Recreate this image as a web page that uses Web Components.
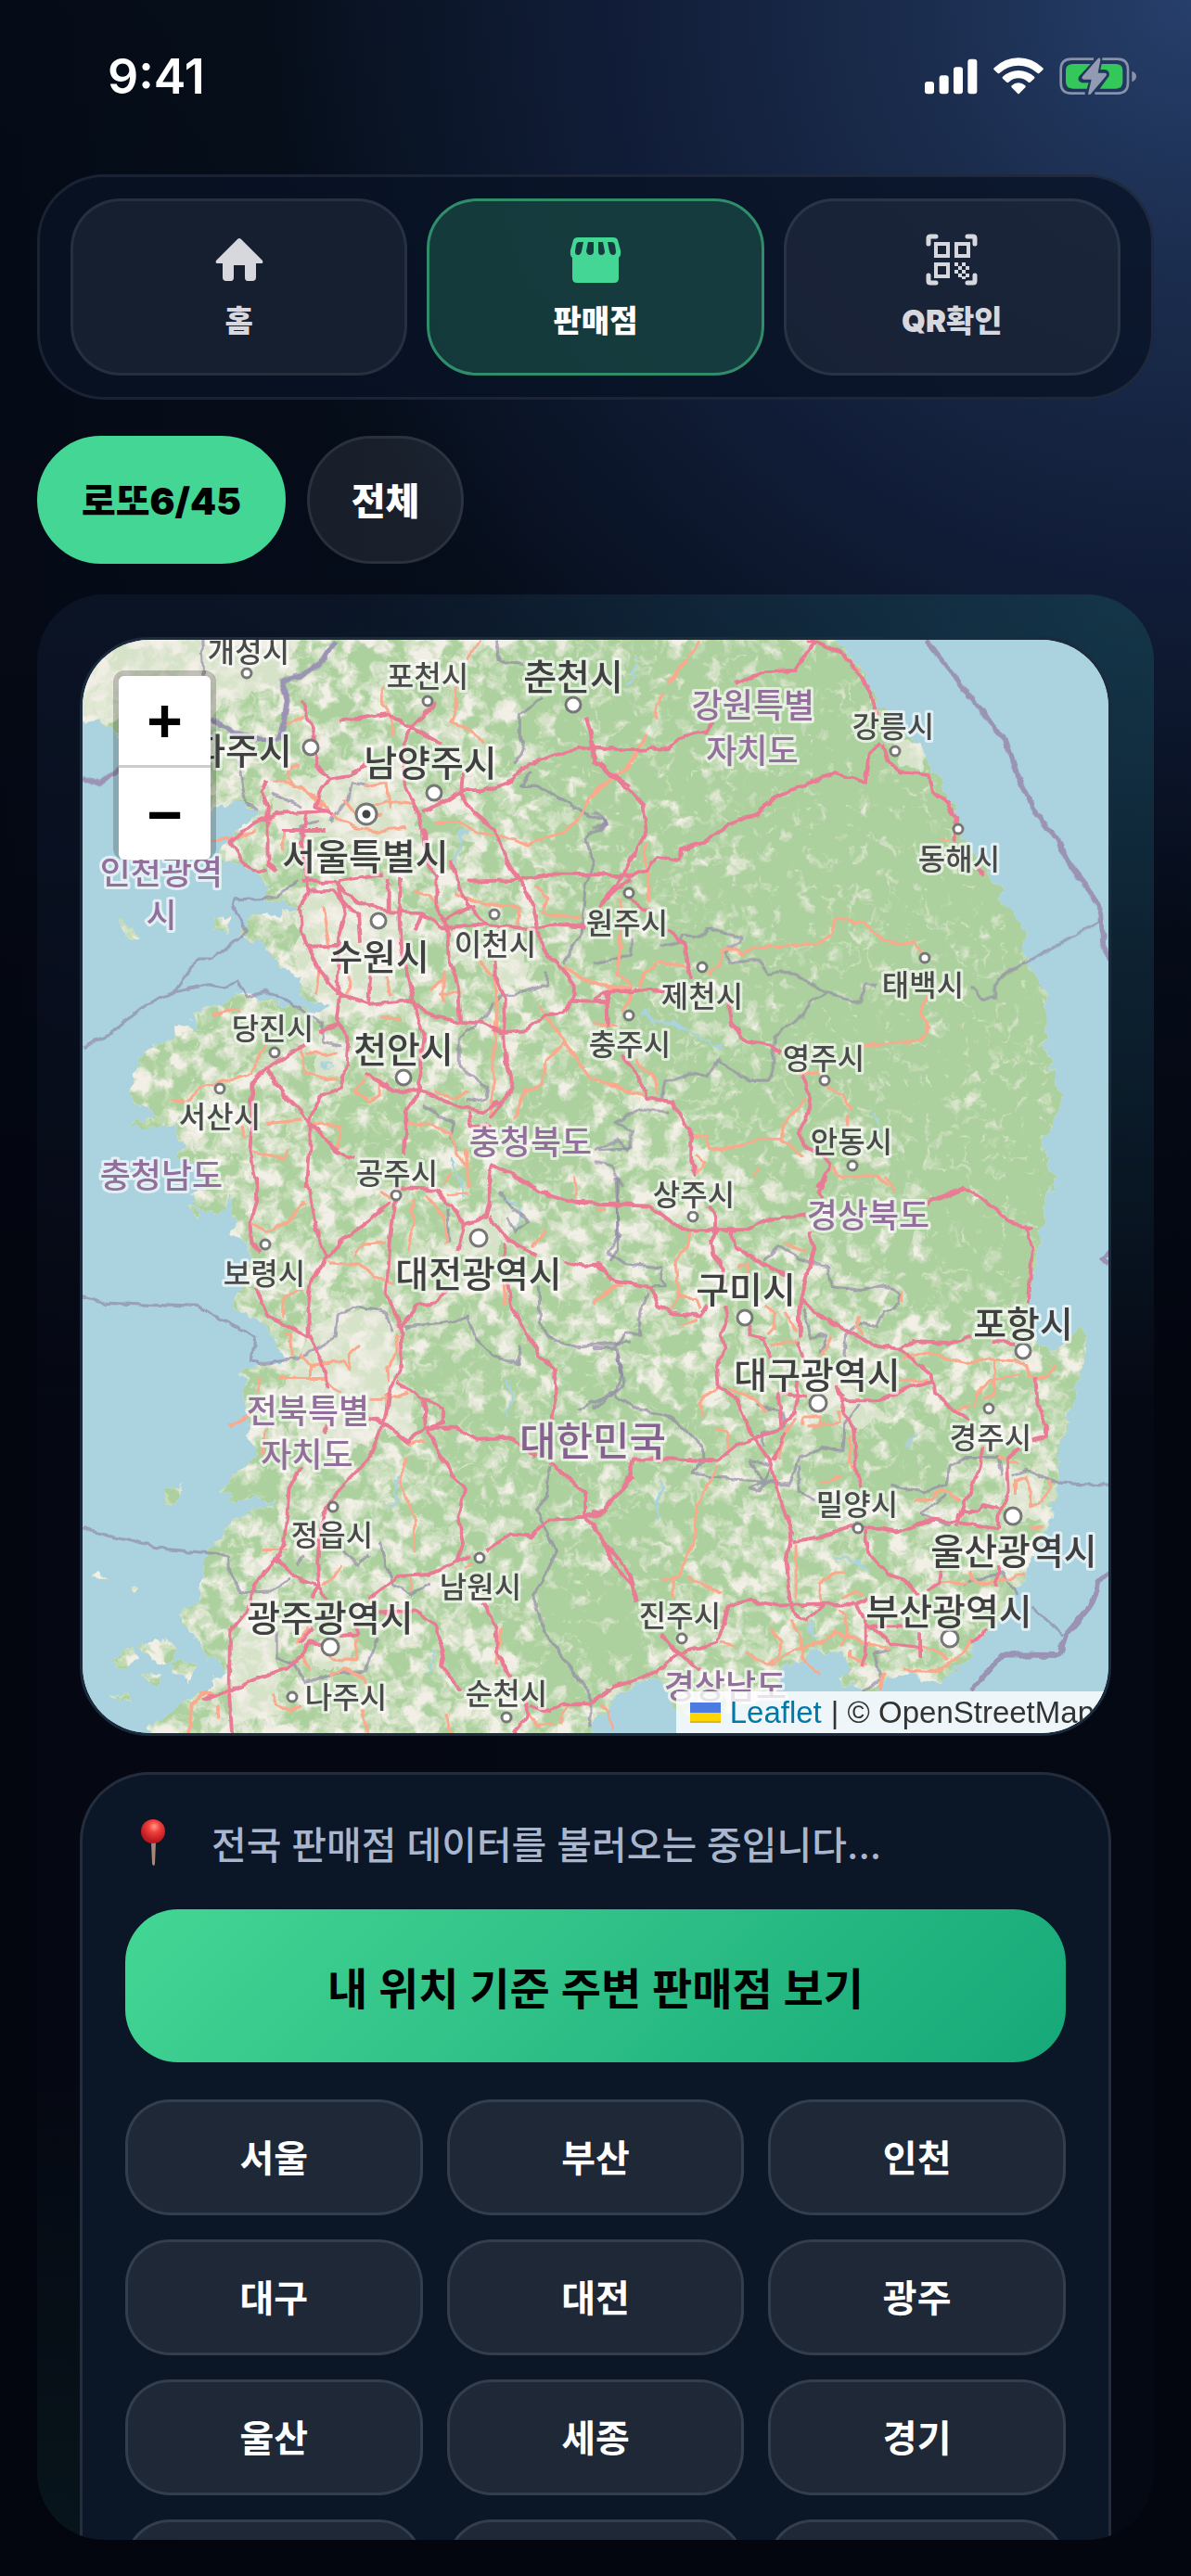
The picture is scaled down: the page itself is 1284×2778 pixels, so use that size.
<!DOCTYPE html>
<html lang="ko">
<head>
<meta charset="utf-8">
<meta name="viewport" content="width=device-width, initial-scale=1">
<title>판매점</title>
<style>
    html, body {
        margin: 0;
        height: 100%;
    }
    body {
        background: #03060f;
        color: #fff;
        font-family: Inter, 'Noto Sans CJK KR', sans-serif;
    }
</style>
</head>
<body>
<store-app></store-app>

<script>
'use strict';

class StatusBar extends HTMLElement {
    constructor() {
        super();
        this.attachShadow({mode: 'open'});
        this.shadowRoot.innerHTML = `
        <time>9:41</time>
        <div id="icons">
            <svg width="57" height="40" viewBox="105 92 171 120" fill="#fff">
                <rect x="105" y="170" width="30" height="40" rx="9"/>
                <rect x="152" y="150" width="30" height="60" rx="9"/>
                <rect x="198" y="123" width="30" height="87" rx="9"/>
                <rect x="244" y="97" width="30" height="113" rx="9"/>
            </svg>
            <svg width="54" height="40" viewBox="328 92 162 120" fill="#fff">
                <path d="M330 126Q364 93 409 93T488 126Q491 129 488 132L476 143Q473 145 470 142Q443 118 409 118T348 142Q345 145 342 143L330 132Q327 129 330 126Z"/>
                <path d="M358 154Q381 134 409 134T460 154Q463 157 460 160L447 172Q444 174 441 172Q427 159 409 159T377 172Q374 174 371 172L358 160Q355 157 358 154Z"/>
                <path d="M387 183Q397 174 409 174T431 183Q434 186 431 189L412 208Q409 211 406 208L387 189Q384 186 387 183Z"/>
            </svg>
            <svg width="84" height="40" viewBox="543 92 252 120">
                <g fill="none" stroke="#8892aa" stroke-width="8">
                    <path d="M654 97H582Q548 97 548 131V174Q548 208 582 208H626"/>
                    <path d="M682 97H731Q765 97 765 131V174Q765 208 731 208H658"/>
                </g>
                <path d="M778 136Q792 141 792 153T778 171Z" fill="#8892aa"/>
                <path d="M644 113H588Q564 113 564 134V171Q564 193 588 193H632L638 174H617Q600 168 606 154Z" fill="#34c759"/>
                <path d="M680 113H726Q748 113 748 134V171Q748 193 726 193H674L704 152Q708 136 692 131H676Z" fill="#34c759"/>
                <path d="M669 94Q677 91 676 101L668 142H691Q699 144 694 152L645 210Q635 217 637 206L647 163H622Q613 161 618 153Z" fill="#929bb1"/>
            </svg>
        </div>

        <style>
        :host {
            display: flex;
            justify-content: space-between;
            align-items: center;
            height: 164px;
            padding: 0 18px 0 76px;
        }
        time {
            font-size: 52px;
            font-weight: 600;
        }
        #icons {
            display: flex;
            gap: 17px;
        }
        </style>
        `;
    }
}

// icons of the top tabs, all on a 60 x 60 grid
const tabIcons = {
    home: `<path d="M28 8Q30 6 32 8L55 31Q56 34 54 34H48V49Q48 53 44 53H39Q36 53 36 49V36H24V49Q24 53 21 53H16Q12 53 12 49V34H6Q4 34 5 31Z"/>`,
    store: `<path fill-rule="evenodd" d="M11 6H49Q53 6 54 9L57 20Q58 25 55 28V50Q55 55 50 55H10Q5 55 5 50V28Q2 25 3 20L6 9Q7 6 11 6Z
        M12 11Q10 11 9 14L8 21Q8 25 11 25Q14 25 15 21L17 11Z
        M22 11L20 21Q21 25 24 25Q28 25 28 21V11Z
        M33 11V21Q33 25 36 25Q40 25 40 21L38 11Z
        M43 11L45 21Q46 25 49 25Q52 25 52 21L51 14Q50 11 48 11Z"/>`,
    qr: `<g fill="none" stroke="currentColor" stroke-width="5" stroke-linecap="round">
            <path d="M5 13V7Q5 5 7 5H13M47 5H53Q55 5 55 7V13M55 47V53Q55 55 53 55H47M13 55H7Q5 55 5 53V47"/>
        </g>
        <path fill-rule="evenodd" d="M11 11h17v17h-17zM15 15v9h9v-9zM33 11h17v17h-17zM37 15v9h9v-9zM11 33h17v17h-17zM15 37v9h9v-9z"/>
        <path d="M33 33h4v4h-4zM41 33h4v4h-4zM37 37h4v4h-4zM45 37h4v4h-4zM33 41h4v4h-4zM41 41h4v4h-4zM37 45h4v4h-4zM45 45h4v4h-4zM41 48h4v3h-4z"/>`
};

class NavTab extends HTMLElement {
    constructor() {
        super();
        this.attachShadow({mode: 'open'});
        this.shadowRoot.innerHTML = `
        <button type="button">
            <svg width="60" height="60" viewBox="0 0 60 60" fill="currentColor"></svg>
            <span><slot></slot></span>
        </button>

        <style>
        :host {
            display: block;
            flex: 1;
        }
        button {
            width: 100%;
            height: 191px;
            display: flex;
            flex-direction: column;
            justify-content: center;
            align-items: center;
            gap: 12px;
            border: 3px solid rgba(255, 255, 255, 0.08);
            border-radius: 54px;
            background: rgba(255, 255, 255, 0.06);
            color: #d6d8dd;
            font: inherit;
            font-size: 33px;
            font-weight: 900;
            line-height: 48px;
            cursor: pointer;
        }
        :host([active]) button {
            border-color: #2f8e69;
            background: rgba(68, 214, 148, 0.2);
        }
        :host([active]) svg {
            color: #44d694;
        }
        :host([active]) span {
            color: #fff;
        }
        </style>
        `;
    }

    connectedCallback() {
        this.shadowRoot.querySelector('svg').innerHTML = tabIcons[this.getAttribute('icon')];
    }
}

class NavTabs extends HTMLElement {
    constructor() {
        super();
        this.attachShadow({mode: 'open'});
        this.shadowRoot.innerHTML = `
        <nav><slot></slot></nav>

        <style>
        :host {
            display: block;
        }
        nav {
            display: flex;
            gap: 21px;
            padding: 23px 33px;
            border: 3px solid rgba(255, 255, 255, 0.08);
            border-radius: 72px;
            background: rgba(9, 19, 38, 0.8);
        }
        </style>
        `;
    }
}

class FilterChip extends HTMLElement {
    constructor() {
        super();
        this.attachShadow({mode: 'open'});
        this.shadowRoot.innerHTML = `
        <button type="button"><slot></slot></button>

        <style>
        :host {
            display: block;
        }
        button {
            height: 138px;
            padding: 0 45px 3px;
            border: 3px solid rgba(255, 255, 255, 0.08);
            border-radius: 69px;
            background: rgba(255, 255, 255, 0.08);
            color: #fff;
            font: inherit;
            font-size: 40px;
            font-weight: 900;
            cursor: pointer;
        }
        :host([active]) button {
            border-color: #44d694;
            background: #44d694;
            color: #000;
        }
        </style>
        `;
    }
}

// [name, x, y, kind] : c = city, b = big city, p = province, n = country
const labels = [
    ['개성시', 268, 703, 'c'], ['포천시', 461, 730, 'c'], ['춘천시', 618, 730, 'b'],
    ['강원특별', 812, 761, 'p'], ['자치도', 811, 810, 'p'], ['강릉시', 963, 784, 'c'],
    ['파주시', 261, 810, 'b'], ['남양주시', 464, 823, 'b'], ['서울특별시', 394, 924, 'b'],
    ['인천광역', 174, 941, 'p'], ['시', 174, 987, 'p'], ['수원시', 409, 1032, 'b'],
    ['이천시', 534, 1019, 'c'], ['원주시', 676, 996, 'c'], ['제천시', 757, 1075, 'c'],
    ['태백시', 995, 1063, 'c'], ['동해시', 1034, 927, 'c'], ['충주시', 679, 1127, 'c'],
    ['영주시', 888, 1142, 'c'], ['당진시', 294, 1110, 'c'], ['천안시', 435, 1132, 'b'],
    ['서산시', 237, 1205, 'c'], ['충청북도', 572, 1232, 'p'], ['충청남도', 174, 1268, 'p'],
    ['공주시', 428, 1266, 'c'], ['안동시', 918, 1232, 'c'], ['상주시', 748, 1289, 'c'],
    ['경상북도', 936, 1311, 'p'], ['대전광역시', 516, 1374, 'b'], ['보령시', 285, 1374, 'c'],
    ['구미시', 804, 1391, 'b'], ['포항시', 1103, 1428, 'b'], ['대구광역시', 881, 1483, 'b'],
    ['경주시', 1068, 1551, 'c'], ['전북특별', 332, 1522, 'p'], ['자치도', 331, 1569, 'p'],
    ['대한민국', 639, 1554, 'n'], ['밀양시', 924, 1623, 'c'], ['울산광역시', 1093, 1673, 'b'],
    ['정읍시', 358, 1656, 'c'], ['남원시', 518, 1712, 'c'], ['광주광역시', 356, 1745, 'b'],
    ['진주시', 733, 1743, 'c'], ['부산광역시', 1023, 1738, 'b'], ['나주시', 373, 1831, 'c'],
    ['순천시', 546, 1827, 'c'], ['경상남도', 782, 1819, 'p']
];

// [x, y, radius]
const dots = [
    [266, 727, 5], [461, 757, 5], [618, 761, 8], [965, 811, 5], [335, 807, 8], [468, 856, 8],
    [408, 994, 8], [533, 987, 5], [678, 964, 5], [757, 1044, 5], [997, 1034, 5], [1033, 895, 5],
    [678, 1096, 5], [889, 1166, 5], [296, 1136, 5], [435, 1163, 8], [237, 1175, 5], [427, 1290, 5],
    [919, 1258, 5], [747, 1313, 5], [516, 1336, 9], [286, 1343, 5], [803, 1422, 8], [1103, 1458, 8],
    [882, 1514, 9], [1066, 1520, 5], [925, 1649, 5], [1092, 1636, 9], [359, 1626, 5], [517, 1681, 5],
    [356, 1777, 9], [735, 1768, 5], [1024, 1768, 9], [315, 1831, 5], [546, 1853, 5]
];

// four tiles, each drawn on its own grid
const tiles = [
    {
        at: 'translate(80 680) scale(0.3827)',
        trunk: `M640 200L675 290 680 380 720 420 780 410 820 380M745 258L880 238 950 275 1020 205M950 275L1030 320M950 275L930 320 925 420 950 480 970 520 980 560
            M980 515L1050 480 1090 455 1150 455 1220 430 1280 380 1380 345 1460 330 1570 340M1460 330L1455 290 1440 250M1460 330L1470 370 1530 420 1570 440
            M1095 400L1090 460 1110 500 1180 560 1210 630 1250 700 1290 770 1305 840 1320 900 1380 960 1405 1000 1405 1040 1380 1080 1330 1085 1270 1130 1200 1135 1150 1110 1090 1105
            M640 710L730 710 800 770 890 795 980 800 1040 840 1150 830 1300 845 1350 830 1440 835M870 690L740 712M545 675L520 685 480 660 440 600 500 550 570 520 650 515 720 510
            M540 425L525 450 545 500 545 660 570 680M585 567L705 567M720 420L690 460 680 500 730 520M655 515L640 600 655 700 660 740 635 780 640 850 660 900 690 960 750 1030 740 1110 775 1150 770 1220 750 1290 690 1320 665 1380 665 1450 655 1570
            M740 712L765 800 745 870 740 1030M660 735L730 735 770 780 800 800 805 885M660 893L745 890M750 1030L830 1055 950 1045 1010 1090 1090 1105
            M920 700L915 800 920 900 940 980 960 1060 985 1140 975 1220 975 1300 935 1360 930 1480M835 970L828 1055M885 700L885 790
            M985 560L990 640 1020 700 1020 780 1050 840 1055 930 1080 1000 1090 1105M1060 650L1090 740 1130 800 1165 830M1110 710L1260 705 1340 688 1480 690 1570 695
            M980 800L960 850M1040 820L1100 790 1130 780M1185 930L1190 990 1215 1040 1210 1130 1215 1220 1235 1290 1200 1340 1175 1380M820 1250L900 1300 980 1300 1080 1345 1150 1360 1200 1330
            M690 1135L740 1115M650 1170L540 1235 500 1280 500 1390 495 1470 515 1570M540 1235L590 1310 665 1385 740 1475 790 1490M1405 1045L1500 1048 1505 1110M1500 1048L1510 1018 1570 1015
            M1480 780L1530 730 1570 700M1165 1570L1175 1510 1220 1530 1300 1570M1175 1400L1120 1400 1110 1360`,
        road: `M600 390L600 420 680 470 740 530 800 560 860 570 930 560M640 385L600 390M560 425L640 440 700 500M590 275L600 265 650 245M870 160L865 200 890 240 900 300M1080 160L1075 230 1060 260 1110 280 1160 320M1140 30L1110 85
            M1570 380L1500 430 1450 480 1430 520 1380 570 1280 608 1240 590 1180 580 1130 570 1090 545 1020 545M390 592L440 592 510 570M590 570L585 620M830 500L880 480 950 490M960 740L1000 750 1030 790M1070 740L1130 765 1200 780 1250 780 1250 840
            M1300 720L1330 760 1320 800 1430 810M1140 930L1185 980 1190 1080 1180 1250 1175 1380M1040 960L1040 1050M1310 1060L1380 1160 1450 1260 1570 1300M1380 1160L1330 1220 1320 1280 1270 1300 1240 1380
            M390 1090L430 1070 470 1075M540 1170L500 1250 430 1270 350 1295 320 1330M270 1325L310 1330M640 1180L650 1250 740 1270M650 1195L740 1195M820 1270L790 1300 830 1330 860 1310 860 1270 820 1260
            M540 1392L640 1382M665 1390L750 1400 740 1470M470 1400L480 1430M500 1470L590 1490 600 1465M1030 1025L1090 1025M1000 1020L1040 980M940 1390L1000 1395 1060 1420 1080 1480 1110 1520M1380 950L1420 980 1490 1000 1570 1010
            M860 1090L920 1100M700 780L720 900M1010 1300L1060 1320 1110 1305M1100 1460L1110 1570M1040 1570L1060 1530M690 960L680 1030M775 970L770 1030M820 440L880 430 890 500M760 480L800 530 870 520M880 980L890 1030`,
        sea: `M735 30L700 90 640 130 585 145 600 200 590 260 575 310M385 250L450 290 520 310 575 310M23 415L70 435 125 390`,
        edge: `M23 1178L100 1140 200 1060 280 1022 380 1000 430 1010 460 990 490 1035 540 1018 640 1070 700 1110 705 1160 750 1175M280 1020L345 930 390 930 490 850 445 780 450 760 570 755 630 705
            M465 370L485 490 520 505M640 500L560 460M640 620L640 550 690 540M1190 30L1200 90 1265 95M1320 190L1255 240 1255 300 1270 340 1240 375M1290 400L1260 440 1300 440 1500 545 1440 590 1465 660 1440 720 1430 850 1380 940
            M1330 960L1330 1000 1240 1030 1200 1030 1150 1100 1085 1150 1085 1230 1165 1290 1160 1320 1105 1330M980 1340L1070 1390 1060 1430 1080 1470M360 30L365 130M1480 1465L1570 1460M720 540L770 480 780 430 830 440`
    },
    {
        at: 'translate(640 680) scale(0.3827)',
        trunk: `M600 35L625 35 600 65 570 115 480 118 400 155M625 35L700 65 750 130 780 180 800 240M335 260L320 285 250 300 210 335 110 340 0 332M0 370L50 415 100 450 140 495 148 570 110 640 80 700
            M0 690L80 695 150 680 180 640 240 650 245 620 310 600 380 550 430 530 460 525 500 480 570 445 680 405 765 430 775 350 810 315M815 320L830 370 865 403 945 410 955 455 1000 490 1020 530 1018 600
            M80 700L20 775M100 760L150 790M210 850L255 885 275 985M380 1050L390 1110 430 1160 500 1170 530 1190M0 1045L40 1020 110 1020 160 1010 200 1022M38 1022L40 1120M80 1200L120 1250 150 1320 220 1330 250 1380 275 1430 275 1500 290 1540
            M585 1255L610 1310 605 1360 580 1410 600 1460 650 1480 665 1500 660 1530 630 1570M1080 675L1100 690`,
        road: `M295 30L260 90 210 150M195 180L175 210 172 255M150 290L125 340 90 390 0 460M150 600L140 640 155 690 155 765M75 760L75 920 70 970 110 1010M130 1010L140 970 190 935 270 955
            M320 970L350 950 360 905 400 900 420 915 450 895 570 890 640 880 670 860 680 815 760 825 800 860 840 885 905 880 925 910M940 1030L920 1080 945 1120 925 1160 830 1165 750 1175M0 990L50 1010 100 1010 105 1040 80 1080M0 1110L70 1115
            M120 1210L175 1270 180 1310M0 1260L60 1290 150 1315M580 1250L640 1250M650 1290L700 1310 725 1350M600 1320L530 1400 530 1440 590 1485M275 1425L320 1430 325 1465 410 1460 470 1435 530 1435M715 1370L715 1400
            M670 1510L690 1540 800 1540 830 1570M290 1480L315 1500 295 1530 275 1500M980 590L1000 600M740 110L755 115M450 1540L470 1520`,
        sea: `M938 30L1000 110 1100 240 1160 310 1190 400 1225 470 1235 500 1310 600 1340 660 1400 740 1430 800 1435 890 1455 930`,
        edge: `M1425 820L1225 935 1170 960 1130 1000 1130 1040 1095 1040 1060 1005M800 1005L770 995 750 1050 650 1020 550 965 490 970 460 930 380 940 370 910 420 870 320 840 300 865 250 860 240 880 185 890M105 870L100 920 0 940
            M660 1025L610 1050 590 1090 510 1140 505 1240 490 1270 440 1270 350 1215 320 1260 270 1250 200 1275 190 1330M215 1360L130 1350 60 1390 110 1410 95 1470 70 1440 0 1465M0 1500L50 1510 80 1570M0 510L35 545 0 560`
    },
    {
        at: 'translate(80 1270) scale(0.3827 0.3954)',
        trunk: `M515 0L515 70 495 130 500 180 520 210M510 300L550 385 610 410 665 440 700 510 715 580M715 680L700 700M640 790L605 850 600 920 590 1000 570 1045 510 1110 490 1180 440 1240 435 1400 445 1520
            M655 0L670 90 690 170 715 220M890 70L830 120 760 170 710 225 670 280 660 340 660 440M905 60L890 180 880 320 920 410 925 510 890 580 875 660 830 770 740 860 700 920 685 1050 690 1110 670 1150
            M920 410L970 350 1020 345 1045 310M570 1045L620 1090 690 1115 710 1150M910 560L990 610 1040 630 1040 670 990 685 940 725 870 670 830 660M985 610L990 685 1070 685 1135 718 1230 712 1300 765M1340 780L1440 860 1440 930 1480 970 1520 1060 1570 1110
            M1000 690L1030 760 1100 855 1080 930 1095 1000 1080 1050M830 1150L910 1090 1000 1085 1080 1050 1110 1035M1160 1020L1230 975 1290 980 1340 935 1440 930 1490 915 1570 820M860 1190L960 1185 1020 1225 1040 1290 1030 1330 1090 1400
            M1150 1160L1190 1230 1195 1300 1225 1365M360 1425L440 1400 510 1370 600 1340 640 1310 660 1270 700 1275M670 1230L640 1270M750 1255L795 1250 795 1230M1020 35L1100 130 1160 110 1170 70 1170 0M905 30L1020 35M1100 130L1080 200
            M1170 110L1220 170 1300 215M1380 235L1440 245 1480 235 1510 280 1570 290M1220 290L1230 350 1270 420 1310 490 1350 520 1360 590 1345 650 1345 665M1215 180L1210 220M1240 0L1310 40 1410 70 1570 75
            M1270 1430L1280 1470 1240 1520M1280 1440L1340 1460 1370 1440 1450 1440 1500 1400 1570 1380`,
        road: `M500 130L540 150 600 125 650 70M860 40L890 60M955 60L955 130 940 200M790 215L815 185 880 180M715 235L800 240 850 270 900 295M645 310L590 325 590 385M590 425L610 430 615 490M640 480L665 515 760 500 775 530 780 480 800 460
            M575 550L700 550 750 590M665 510L665 550M520 545L515 590M830 605L890 605 940 590M910 430L910 480 880 520 885 560M440 680L500 645M540 690L530 760M935 770L920 840 960 930 960 1025M530 1018L600 1018M750 1060L730 1090 700 1110
            M1100 1070L1120 1050M950 1095L950 1130M640 1300L665 1350M700 1280L725 1315 795 1320 795 1260M630 1270L660 1230M320 1520L330 1440 360 1410 430 1410M560 1410L570 1440 610 1455 640 1440M720 1360L760 1340 810 1360 830 1400M810 1450L830 1520
            M1205 1230L1190 1330M1270 1440L1300 1500 1350 1490M1390 1440L1370 1490M1045 1465L1060 1520M880 660L880 590M940 730L990 720M1290 190L1330 145M1460 345L1540 290M990 50L1040 110 1050 180M1050 50L1110 45M1210 290L1215 350M1470 90L1500 90M1410 0L1415 60M410 1480L405 1440`,
        sea: ``,
        edge: `M23 328L90 345 350 355 510 435 500 500 520 512 630 495 700 460 740 435 745 380 800 350 880 370 900 420M930 410L1060 395 1110 380 1130 440 1180 490 1250 510 1260 460M1310 300L1310 400 1340 440 1420 465 1570 450
            M23 960L100 980 250 1015 400 1028 435 1040 440 1090 470 1135 550 1130 610 1100M625 1060L650 1030M760 1020L800 1060 830 1030M860 1000L880 1060 900 1110 950 1140 1000 1110
            M1340 790L1330 880 1300 910 1360 1020 1320 1100 1290 1140 1330 1250 1400 1340 1450 1400 1455 1500M570 1240L570 1310 620 1330 650 1380 750 1350 820 1350 855 1260M1055 180L1050 90M1530 0L1530 200 1510 230M1530 480L1550 570 1420 640
            M1200 40L1240 90 1280 120 1240 150 1220 110`
    },
    {
        at: 'translate(640 1270) scale(0.3827 0.3954)',
        trunk: `M0 75L160 80 250 145 345 145 430 145 500 115 600 105M655 0L635 40 650 60M610 150L620 200 600 270 580 350 580 440M345 145L330 180 335 210 365 250 365 290M320 80L345 110 345 150M385 145L400 190 470 235 540 265M580 330L640 380 730 430 800 460 860 470
            M940 75L1040 30 1090 55 1180 130 1235 140M1220 140L1235 200 1225 350M0 235L60 285 160 300 180 350 220 372 300 378 320 350M370 350L378 380 360 430 370 470 345 520 350 575 400 600 430 670 460 720 500 780 520 870 560 970 540 1050 555 1170
            M440 400L440 430 480 440 500 500M570 450L590 500M860 470L900 450 1000 455 1060 435M1120 450L1190 455M860 470L950 540 960 590 1020 640 1060 665M700 610L800 610 900 570 950 560
            M515 610L520 590 600 600M575 560L570 640 520 690 400 735 350 775 230 770 115 770 100 820 30 910 0 915M520 600L530 690M680 570L705 600 700 640 735 690 740 800 755 850M560 995L650 980 740 950 850 970 960 935 1040 945 1140 965
            M765 960L770 1020 830 1085 880 1100 910 1140M1245 545L1250 620 1275 680 1275 710 1235 720M1200 745L1165 770 1170 860 1140 920 1140 965M1095 735L1090 790 1040 910 1020 955M1040 910L1080 915 1100 895 1140 905M980 1070L975 1110 940 1130M1140 1060L1135 1120
            M0 945L40 1010 100 1080 120 1160M190 1250L240 1300 300 1345M0 1430L60 1390 180 1350 240 1300 350 1270 370 1210 380 1170 440 1155 520 1170 620 1165 740 1165 770 1150M555 1170L570 1195 600 1210 650 1165M740 1165L770 1220 840 1275 920 1285M770 1220L770 1300 755 1335
            M1105 1230L1100 1250 1060 1270M920 1240L920 1310M505 775L540 700M780 1225L870 1225`,
        road: `M275 150L265 190 230 230 240 330 220 360M240 330L290 330 300 360M410 245L435 240 430 280M0 340L80 295M535 180L600 205M480 350L510 370 510 410 490 430M540 370L570 420M500 460L570 450M640 490L670 435M750 380L740 410 760 430M865 310L870 340M250 405L290 390
            M310 655L300 620 305 600 350 580M380 575L460 610 490 640M345 690L375 695 380 745M590 680L590 655 640 655 640 680 600 680M640 680L690 670 690 640M520 770L540 700 570 660M725 700L720 780 740 800M635 838L700 820M860 555L940 555
            M870 500L940 480 1050 510 1110 495 1190 500 1220 520 1230 545 1280 545 1300 515M1130 500L1130 590 1095 610M1070 630L1080 590 1120 555 1200 540M1010 640L1060 625M1190 870L1190 830 1215 820 1230 860 1230 900 1265 885 1285 850 1285 825
            M905 885L950 880 980 855 1040 885M1140 765L1195 785M1230 955L1265 955M980 1110L1060 1105M1060 1080L1080 1110 1170 1100 1210 1080M350 790L320 850 290 900 285 980 240 1090 190 1105M225 1100L225 1150M265 1090L355 1135M570 1000L570 1150
            M640 1160L635 1110 680 1080 710 1080M700 1150L740 1130 760 1140M555 1210L590 1270 590 1310 635 1365M500 1230L530 1270 520 1310 490 1330M430 1295L480 1330 510 1330 560 1290 640 1270 680 1240 760 1270 840 1290M710 1200L715 1250 700 1280
            M720 1290L720 1310 770 1330M870 1345L960 1350 1000 1330 1050 1290 1060 1260M920 1280L980 1300 1000 1320M805 1400L815 1350M360 1270L400 1280M50 1510L45 1460 20 1440M820 0L850 40M690 1180L715 1200`,
        sea: `M1065 1400L1150 1303 1310 1305 1330 1250 1400 1170 1420 1110 1455 1075M1455 200L1435 225 1455 240`,
        edge: `M1235 1175L1320 1250M1195 1140L1150 1080 1040 1110M1455 843L1310 835 1220 800 1180 815M1150 810L1140 765 1050 765 1000 790 990 840 930 860 840 840M480 230L520 190 620 240 660 250 670 300 760 310 820 295 860 320 860 350 820 370 800 410 750 400 710 430 705 490
            M590 360L610 440 655 430 640 480M0 470L60 465 90 430 130 430 130 370 155 320M160 300L200 300 190 250 90 240 60 220 40 210 70 160 60 0M65 465L80 540 60 590 0 630M60 595L110 630 220 655 310 740 310 770 280 810 400 825 470 830 550 840 580 770 640 740 700 750 705 680 750 620
            M435 770L500 790 470 860 440 850 480 830 435 770M580 790L580 860 620 880M920 920L990 870M920 920L1000 950M760 1400L810 1370 790 1300 840 1290M460 620L530 640 540 680 480 700 480 730`
    }
];

const land = `M80 680V780L109 776 126 795 156 806 195 841 227 871 252 867 279 871 271 887 245 906 233 925 252 929 279 944 289 956 285 971 310 975 325 982
    294 986 271 990 260 1013 287 1017 294 1032 306 1047 325 1055 325 1078 356 1086 348 1093 325 1089 294 1082 252 1070 241 1086 202 1097 221 1112 190 1105
    191 1124 157 1132 145 1162 137 1181 153 1197 172 1204 141 1216 187 1216 199 1231 191 1250 214 1258 222 1280 206 1294 229 1313 248 1290 252 1317 248 1333
    268 1345 264 1369 260 1393 252 1412 275 1420 294 1440 300 1460 310 1468 275 1474 258 1480 264 1495 260 1511 271 1527 264 1547 279 1567 256 1586 241 1606
    252 1620 298 1618 287 1626 248 1640 237 1659 225 1677 218 1709 214 1725 195 1740 195 1756 210 1768 225 1788 241 1804 225 1820 195 1839 164 1863 150 1880
    H640L638 1862 650 1850 660 1832 671 1826 690 1816 712 1812 722 1830 735 1850 780 1850 830 1830 847 1800 865 1790 877 1778 895 1785 904 1780 912 1794
    920 1804 905 1812 925 1822 938 1828 961 1812 977 1808 1015 1816 1042 1788 1061 1764 1080 1745 1092 1720 1106 1697 1122 1665 1134 1635 1138 1600 1142 1575
    1150 1540 1157 1500 1168 1475 1173 1445 1167 1432 1150 1445 1135 1460 1120 1450 1112 1430 1112 1400 1118 1350 1128 1310 1135 1270 1130 1250 1126 1231
    1139 1212 1142 1181 1134 1155 1126 1124 1128 1070 1115 1055 1105 1024 1103 1001 1080 967 1065 944 1038 906 1030 875 1013 845 996 814 965 779 946 757
    927 722 904 691 900 680Z
    M128 996l16 4 6 14 -14 2zM232 990l18 -2 -4 14 -16 4zM178 1610l16 -8 -6 16 -10 6zM120 1788l22 -12 8 16 -18 10zM150 1775l30 -6 10 20 -26 8zM150 1808l26 -4 -8 18zM190 1790l20 4 -6 22 -18 -8zM120 1830l18 -6 4 16zM98 1700l10 -6 4 14zM140 1712l8 2 -4 8zM208 1300l10 8 -8 8z`;

class StoreMap extends HTMLElement {
    constructor() {
        super();
        this.attachShadow({mode: 'open'});
        this.shadowRoot.innerHTML = `
        <svg id="map" viewBox="89 691 1106 1179" preserveAspectRatio="xMidYMid slice" role="img" aria-label="지도">
            <defs>
                <clipPath id="coast"><path d="${land}"/></clipPath>
                <filter id="rough" filterUnits="userSpaceOnUse" x="80" y="680" width="1130" height="1200">
                    <feTurbulence type="fractalNoise" baseFrequency="0.06" numOctaves="3" seed="4"/>
                    <feDisplacementMap in="SourceGraphic" scale="18" xChannelSelector="R" yChannelSelector="G"/>
                </filter>
                <filter id="wiggle" filterUnits="userSpaceOnUse" x="80" y="680" width="1130" height="1200">
                    <feTurbulence type="fractalNoise" baseFrequency="0.07" numOctaves="2" seed="9"/>
                    <feDisplacementMap in="SourceGraphic" scale="7" xChannelSelector="R" yChannelSelector="G"/>
                </filter>
                <!-- opacity of the zone sets how much of it is wooded -->
                <filter id="forest" filterUnits="userSpaceOnUse" x="80" y="680" width="1130" height="1200" color-interpolation-filters="sRGB">
                    <feGaussianBlur in="SourceGraphic" stdDeviation="14" result="zone"/>
                    <feTurbulence type="fractalNoise" baseFrequency="0.05" numOctaves="5" seed="21"/>
                    <feColorMatrix values="0 0 0 0 0  0 0 0 0 0  0 0 0 0 0  1 0 0 0 0" result="noise"/>
                    <feComposite in="zone" in2="noise" operator="arithmetic" k2="0.5" k3="0.5"/>
                    <feComponentTransfer result="mask"><feFuncA type="linear" slope="7" intercept="-3"/></feComponentTransfer>
                    <feFlood flood-color="#add19e"/>
                    <feComposite in2="mask" operator="in"/>
                </filter>
                <filter id="veins" filterUnits="userSpaceOnUse" x="80" y="680" width="1130" height="1200" color-interpolation-filters="sRGB">
                    <feTurbulence type="turbulence" baseFrequency="0.024" numOctaves="4" seed="7"/>
                    <feColorMatrix values="0 0 0 0 0.94  0 0 0 0 0.94  0 0 0 0 0.88  -9 0 0 0 1.2"/>
                    <feComposite in2="SourceGraphic" operator="in"/>
                </filter>
            </defs>
            <rect x="80" y="680" width="1130" height="1200" fill="#aad3df"/>
            <g filter="url(#rough)">
                <path d="${land}" fill="#f2efe6"/>
                <g clip-path="url(#coast)">
                    <g filter="url(#forest)">
                        <path d="M80 680H1210V1880H80Z" fill-opacity="0.54"/>
                        <path d="M560 680H1210V1460L1000 1420 830 1310 740 1210 640 1130 620 980 560 850Z" fill-opacity="0.3"/>
                        <path d="M860 680H1210V1420L1040 1380 960 1200 840 1100 820 900 780 780Z" fill-opacity="0.3"/>
                        <path d="M440 1420L620 1460 760 1500 780 1720 600 1860 520 1700 460 1560Z" fill-opacity="0.2"/>
                        <path d="M560 1700L690 1690 690 1790 600 1840ZM860 1540L1050 1520 1030 1620 880 1610ZM540 1180L640 1160 640 1260 560 1290ZM360 1160L460 1180 440 1260 370 1260Z" fill-opacity="0.3"/>
                        <path d="M240 1590L310 1580 300 1610 250 1620Z" fill-opacity="0.5"/>
                    </g>
                    <rect x="80" y="680" width="1130" height="1200" filter="url(#veins)" opacity="0.6"/>
                    <g id="plains" fill="#f2efe6" opacity="0.6">
                        <path d="M80 680H330L300 740 240 760 200 830 130 780 80 790Z"/>
                        <path d="M290 850L360 830 450 860 450 900 400 915 300 900Z"/>
                        <path d="M320 960L400 950 440 1000 420 1090 350 1100 320 1040Z"/>
                        <path d="M350 1420L420 1410 430 1480 400 1560 330 1560 300 1500Z"/>
                        <path d="M270 1720L300 1700 300 1850 250 1860 250 1780Z"/>
                        <path d="M410 1500L440 1500 450 1550 420 1550ZM340 1770L380 1770 380 1800 340 1800ZM500 1310L540 1310 540 1360 500 1350Z"/>
                        <path d="M860 1490L900 1480 960 1530 920 1545 880 1520ZM965 790L1000 815 990 830 970 825ZM1090 1450L1130 1465 1120 1480 1095 1475ZM1085 1590L1130 1580 1125 1640 1085 1640Z"/>
                        <path d="M340 1130L370 1130 370 1160 340 1160ZM530 1010L560 1010 570 1060 540 1060Z"/>
                    </g>
                </g>
                <g fill="none" stroke="#aad3df" stroke-width="3">
                    <path d="M548 1490L552 1510 545 1530M430 1590L420 1630M712 1600L705 1640M545 1290L560 1310 555 1330M690 1095L720 1105 780 1130M940 1200L950 1230M900 1680L940 1690M870 1750L880 1765M470 1780L460 1810M690 710L680 740M345 1150L360 1150M490 1250L500 1290M980 1560L990 1545M500 895L490 930"/>
                </g>
            </g>
            <g id="lines" filter="url(#wiggle)"></g>
            <g id="dots"></g>
            <g id="labels" transform="translate(0 -2)"></g>
        </svg>
        <div id="zoom">
            <button type="button" aria-label="확대">+</button>
            <button type="button" aria-label="축소">&minus;</button>
        </div>
        <div id="credit">
            <svg width="33" height="22" viewBox="0 0 33 22"><path fill="#4c7be1" d="M0 0h33v11h-33z"/><path fill="#ffd500" d="M0 11h33v9h-33z"/><path fill="#e0bc00" d="M0 20h33v2h-33z"/></svg>
            <a href="#leaflet">Leaflet</a><span>| © OpenStreetMap</span>
        </div>

        <style>
        :host {
            display: block;
            position: relative;
            overflow: hidden;
            border: 3px solid #1b2a3d;
            border-radius: 75px;
            background: #aad3df;
            background-clip: padding-box;
        }
        #map {
            display: block;
            width: 100%;
            aspect-ratio: 1106 / 1179;
        }
        #lines path {
            fill: none;
            stroke-linejoin: round;
        }
        .trunk { stroke: #e97c94; stroke-width: 10px; }
        .road { stroke: #fba98c; stroke-width: 8px; }
        .sea { stroke: #9a93b3; stroke-width: 15px; }
        .edge { stroke: #8f84a6; stroke-width: 8px; opacity: 0.65; }
        #dots circle {
            fill: #fff;
            stroke: #777;
            stroke-width: 3px;
        }
        text {
            font-family: 'Noto Sans CJK KR', sans-serif;
            font-size: 32px;
            font-weight: 500;
            text-anchor: middle;
            dominant-baseline: central;
            fill: #4a4a4a;
            stroke: rgba(255, 255, 255, 0.65);
            stroke-width: 6px;
            stroke-linejoin: round;
            paint-order: stroke;
        }
        .b { font-size: 39px; fill: #404040; }
        .p { font-size: 36px; fill: #93709b; }
        .n { font-size: 43px; fill: #86608f; }
        #zoom {
            position: absolute;
            top: 33px;
            left: 33px;
            width: 99px;
            border: 6px solid rgba(0, 0, 0, 0.2);
            border-bottom: 0;
            border-radius: 12px;
        }
        #zoom button {
            display: block;
            width: 100%;
            height: 99px;
            padding: 0;
            border: 0;
            background: #fff;
            color: #000;
            font: bold 66px/96px 'Liberation Sans', sans-serif;
        }
        #zoom button:first-child {
            border-bottom: 3px solid #ccc;
            border-radius: 6px 6px 0 0;
        }
        #zoom button:last-child {
            border-radius: 0 0 6px 6px;
        }
        #credit {
            position: absolute;
            right: 0;
            bottom: 0;
            display: flex;
            align-items: center;
            gap: 10px;
            height: 45px;
            padding: 0 15px;
            background: rgba(255, 255, 255, 0.8);
            color: #333;
            font: 33px/45px 'Liberation Sans', sans-serif;
            white-space: nowrap;
        }
        #credit a {
            color: #0078a8;
            text-decoration: none;
        }
        </style>
        `;
    }

    connectedCallback() {
        const root = this.shadowRoot;
        // weakest lines first, so that the trunk roads stay on top
        root.getElementById('lines').innerHTML = ['edge', 'road', 'trunk', 'sea'].map(kind =>
            tiles.map(tile => `<g transform="${tile.at}"><path class="${kind}" d="${tile[kind]}"/></g>`).join('')
        ).join('');
        root.getElementById('dots').innerHTML =
            dots.map(([x, y, r]) => `<circle cx="${x}" cy="${y}" r="${r}"/>`).join('') +
            `<circle cx="395" cy="879" r="11"/><circle cx="395" cy="879" r="3" style="fill:#444;stroke:#444"/>`;
        root.getElementById('labels').innerHTML =
            labels.map(([name, x, y, kind]) => `<text class="${kind}" x="${x}" y="${y}">${name}</text>`).join('');
    }
}

class RegionButton extends HTMLElement {
    constructor() {
        super();
        this.attachShadow({mode: 'open'});
        this.shadowRoot.innerHTML = `
        <button type="button"><slot></slot></button>

        <style>
        :host {
            display: block;
        }
        button {
            width: 100%;
            height: 125px;
            padding: 0 0 3px;
            border: 3px solid rgba(255, 255, 255, 0.1);
            border-radius: 48px;
            background: rgba(255, 255, 255, 0.08);
            color: #fff;
            font: inherit;
            font-size: 40px;
            font-weight: 700;
            cursor: pointer;
        }
        </style>
        `;
    }
}

class StoreFinder extends HTMLElement {
    constructor() {
        super();
        this.attachShadow({mode: 'open'});
        this.shadowRoot.innerHTML = `
        <p>
            <svg width="60" height="54" viewBox="0 0 60 54">
                <defs><radialGradient id="ball" cx="0.55" cy="0.3" r="0.6">
                    <stop offset="0" stop-color="#ff9a8c"/><stop offset="0.4" stop-color="#f2403c"/><stop offset="1" stop-color="#b81a20"/>
                </radialGradient></defs>
                <path d="M28 26h5l-1 24q-1 4 -3 0z" fill="#a5877c"/>
                <circle cx="30" cy="15" r="13" fill="url(#ball)"/>
            </svg>
            <span>전국 판매점 데이터를 불러오는 중입니다...</span>
        </p>
        <button type="button">내 위치 기준 주변 판매점 보기</button>
        <div id="regions"><slot></slot></div>

        <style>
        :host {
            display: block;
            padding: 46px;
            border: 3px solid rgba(255, 255, 255, 0.1);
            border-radius: 75px;
            background: #0b1627;
        }
        p {
            display: flex;
            align-items: center;
            gap: 33px;
            height: 54px;
            margin: 0 0 45px;
            color: #a9b6cd;
            font-size: 41px;
            font-weight: 500;
        }
        button {
            display: block;
            width: 100%;
            height: 165px;
            border: 0;
            border-radius: 57px;
            background: linear-gradient(135deg, #44d694, #16a878);
            color: #000;
            font: inherit;
            font-size: 47px;
            font-weight: 600;
            cursor: pointer;
        }
        #regions {
            display: grid;
            grid-template-columns: repeat(3, 1fr);
            gap: 26px;
            margin-top: 40px;
        }
        </style>
        `;
    }
}

class StoreApp extends HTMLElement {
    constructor() {
        super();
        this.attachShadow({mode: 'open'});
        this.shadowRoot.innerHTML = `
        <status-bar></status-bar>
        <nav-tabs>
            <nav-tab icon="home">홈</nav-tab>
            <nav-tab icon="store" active>판매점</nav-tab>
            <nav-tab icon="qr">QR확인</nav-tab>
        </nav-tabs>
        <div id="filters">
            <filter-chip active>로또6/45</filter-chip>
            <filter-chip>전체</filter-chip>
        </div>
        <main>
            <store-map></store-map>
            <store-finder>
                <region-button>서울</region-button>
                <region-button>부산</region-button>
                <region-button>인천</region-button>
                <region-button>대구</region-button>
                <region-button>대전</region-button>
                <region-button>광주</region-button>
                <region-button>울산</region-button>
                <region-button>세종</region-button>
                <region-button>경기</region-button>
                <region-button>강원</region-button>
                <region-button>충북</region-button>
                <region-button>충남</region-button>
            </store-finder>
        </main>

        <style>
        :host {
            display: flex;
            flex-direction: column;
            box-sizing: border-box;
            height: 100vh;
            padding: 0 40px 39px;
            background:
                radial-gradient(circle at 100% 0, #263f6b 0, #1a2b4b 320px, #111d38 620px, rgba(9, 17, 34, 0) 1000px),
                linear-gradient(90deg, rgba(3, 5, 14, 0.5), rgba(3, 5, 14, 0) 50%),
                linear-gradient(#07121f 0, #060d1b 800px, #03060f 1500px);
        }
        nav-tabs {
            margin-top: 24px;
        }
        #filters {
            display: flex;
            gap: 23px;
            margin: 39px 0 33px;
        }
        main {
            flex: 1;
            min-height: 0;
            display: flex;
            flex-direction: column;
            gap: 39px;
            box-sizing: border-box;
            padding: 46px;
            border-radius: 72px;
            overflow: hidden auto;
            scrollbar-width: none;
            background:
                radial-gradient(circle at 100% 0, rgba(24, 78, 92, 0.5), rgba(24, 78, 92, 0) 900px),
                radial-gradient(circle at 0 100%, rgba(20, 90, 70, 0.16), rgba(20, 90, 70, 0) 500px),
                linear-gradient(rgba(17, 30, 52, 0.5), rgba(17, 24, 44, 0.15) 900px);
        }
        store-map, store-finder {
            flex: none;
        }
        </style>
        `;
    }
}

window.customElements.define('status-bar', StatusBar);
window.customElements.define('nav-tab', NavTab);
window.customElements.define('nav-tabs', NavTabs);
window.customElements.define('filter-chip', FilterChip);
window.customElements.define('store-map', StoreMap);
window.customElements.define('region-button', RegionButton);
window.customElements.define('store-finder', StoreFinder);
window.customElements.define('store-app', StoreApp);
</script>
</body>
</html>
